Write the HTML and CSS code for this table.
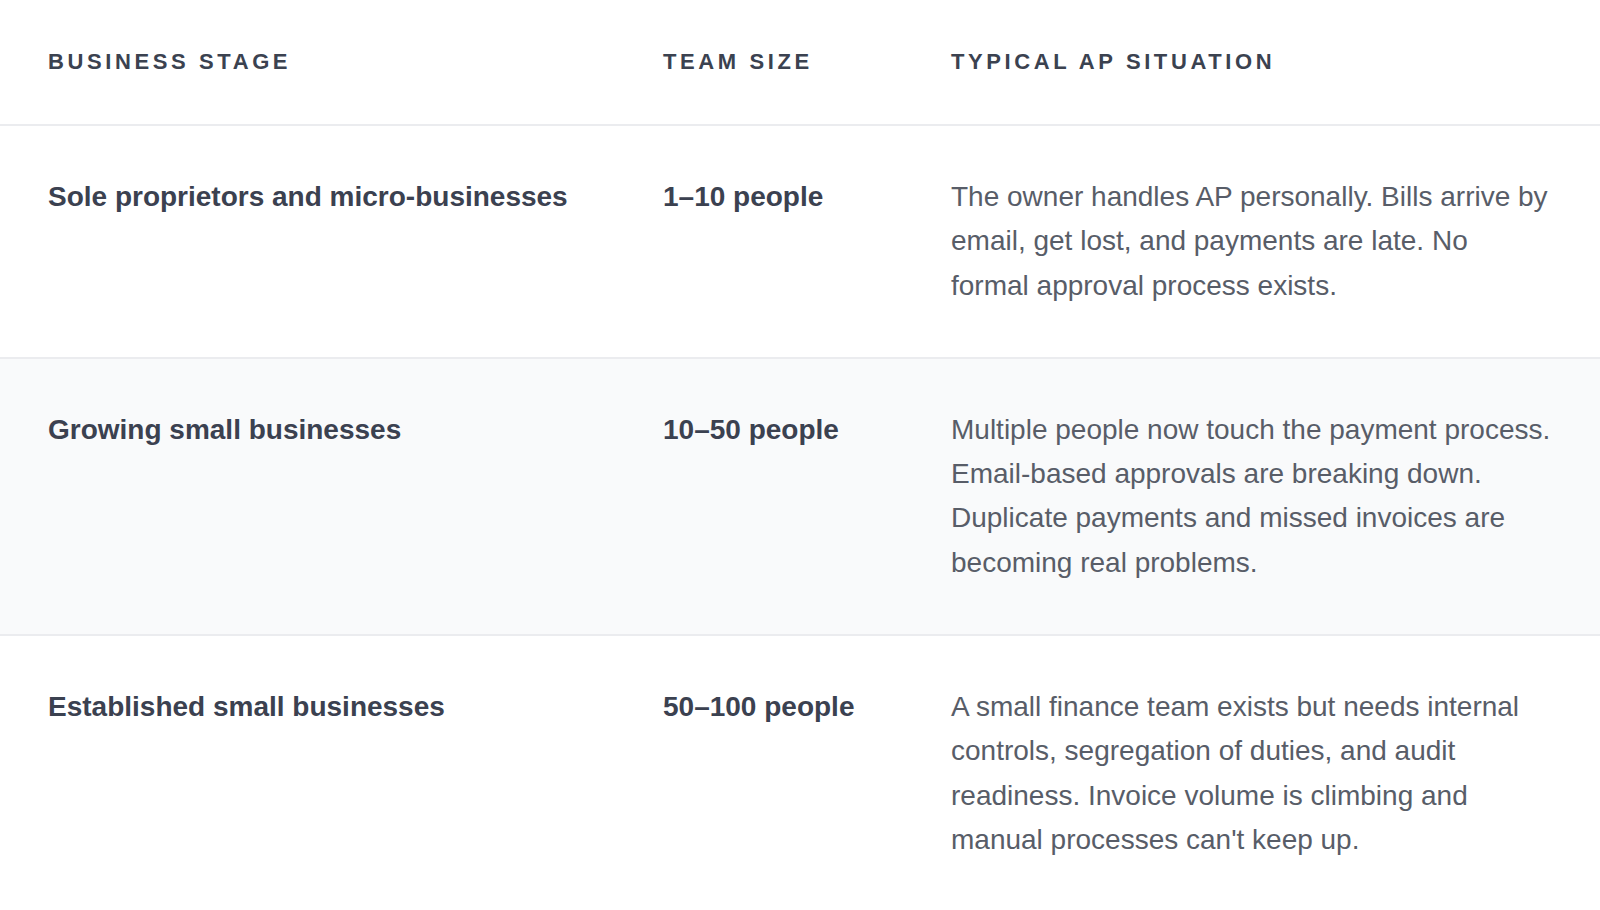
FILE: index.html
```html
<!DOCTYPE html>
<html lang="en">
<head>
<meta charset="utf-8">
<title>AP situations by business stage</title>
<link rel="stylesheet" href="styles.css">
</head>
<body>
<div class="table">
  <div class="row head">
    <div class="cell th">Business Stage</div>
    <div class="cell th">Team Size</div>
    <div class="cell th">Typical AP Situation</div>
  </div>
  <div class="row">
    <div class="cell strong">Sole proprietors and micro-businesses</div>
    <div class="cell strong">1–10 people</div>
    <div class="cell text">The owner handles AP personally. Bills arrive by email, get lost, and payments are late. No formal approval process exists.</div>
  </div>
  <div class="row alt">
    <div class="cell strong">Growing small businesses</div>
    <div class="cell strong">10–50 people</div>
    <div class="cell text">Multiple people now touch the payment process. Email-based approvals are breaking down. Duplicate payments and missed invoices are becoming real problems.</div>
  </div>
  <div class="row">
    <div class="cell strong">Established small businesses</div>
    <div class="cell strong">50–100 people</div>
    <div class="cell text">A small finance team exists but needs internal controls, segregation of duties, and audit readiness. Invoice volume is climbing and manual processes can't keep up.</div>
  </div>
</div>
</body>
</html>
```
FILE: styles.css
```css
html, body {
  margin: 0;
  padding: 0;
  background: #ffffff;
}
body {
  font-family: "Liberation Sans", Arial, sans-serif;
  color: #374151;
}
.table {
  width: 1600px;
}
.row {
  display: grid;
  grid-template-columns: 615px 288px 1fr;
  border-bottom: 2px solid #ebecef;
}
.row.alt {
  background: #f9fafb;
}
.cell {
  padding: 49px 0 49px 48px;
  font-size: 28px;
  line-height: 44.3px;
}
.cell:last-child {
  padding-right: 48px;
}
.head .cell {
  padding-top: 48px;
  padding-bottom: 48px;
}
.th {
  font-size: 22px;
  line-height: 28px;
  font-weight: 700;
  text-transform: uppercase;
  letter-spacing: 3.6px;
  color: #3b4250;
}
.strong {
  font-weight: 700;
  color: #3b4150;
}
.text {
  color: #585d68;
}
```
